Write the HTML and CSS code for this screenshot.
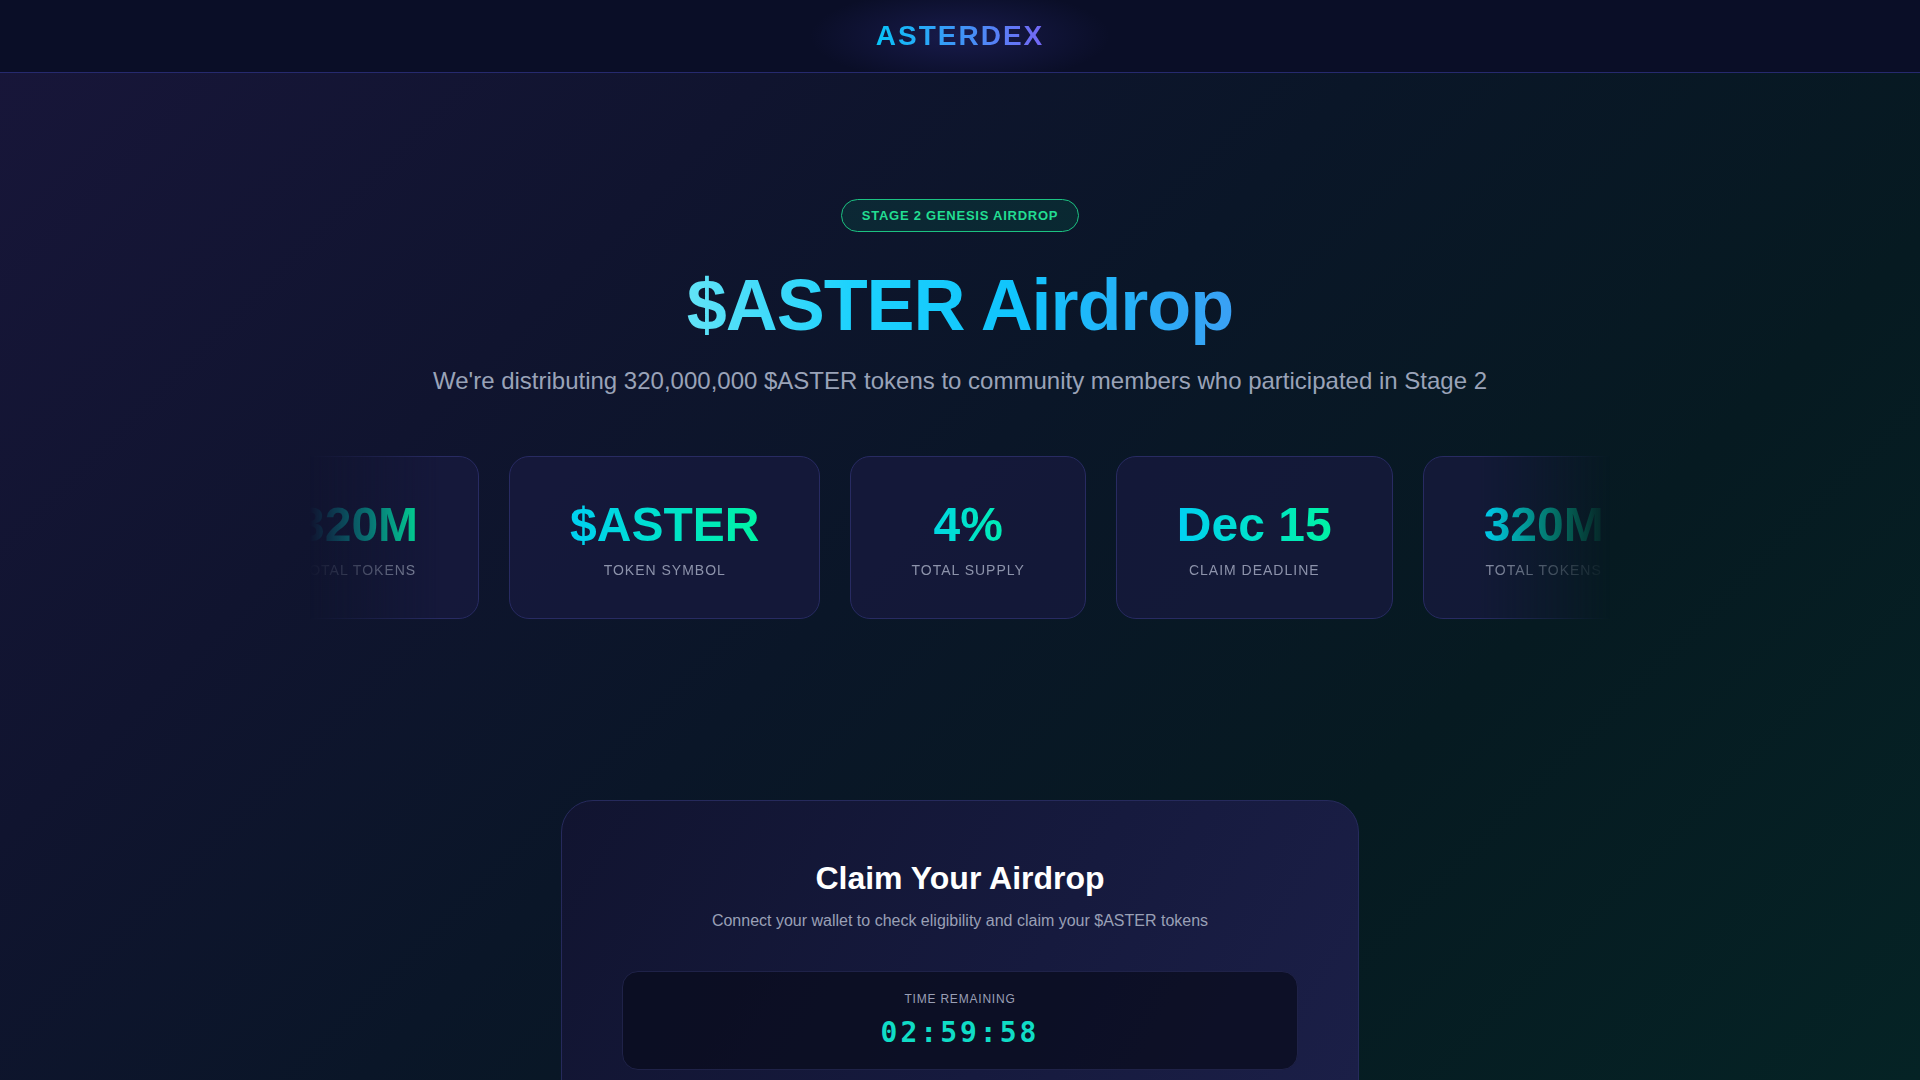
FILE: index.html
```html
<!DOCTYPE html>
<html lang="en">
<head>
<meta charset="utf-8">
<title>$ASTER Airdrop</title>
<link rel="stylesheet" href="styles.css">
</head>
<body>
<header class="topbar">
  <div class="logo">ASTERDEX</div>
</header>
<main class="page">
  <section class="hero">
    <div class="badge">STAGE 2 GENESIS AIRDROP</div>
    <h1 class="title">$ASTER Airdrop</h1>
    <p class="subtitle">We're distributing 320,000,000 $ASTER tokens to community members who participated in Stage 2</p>
    <div class="stats">
      <div class="track">
        <div class="stat"><div class="stat-value">320M</div><div class="stat-label">TOTAL TOKENS</div></div>
        <div class="stat"><div class="stat-value">$ASTER</div><div class="stat-label">TOKEN SYMBOL</div></div>
        <div class="stat"><div class="stat-value">4%</div><div class="stat-label">TOTAL SUPPLY</div></div>
        <div class="stat"><div class="stat-value">Dec 15</div><div class="stat-label">CLAIM DEADLINE</div></div>
        <div class="stat"><div class="stat-value">320M</div><div class="stat-label">TOTAL TOKENS</div></div>
        <div class="stat"><div class="stat-value">$ASTER</div><div class="stat-label">TOKEN SYMBOL</div></div>
        <div class="stat"><div class="stat-value">4%</div><div class="stat-label">TOTAL SUPPLY</div></div>
      </div>
    </div>
  </section>
  <section class="claim">
    <h2 class="claim-title">Claim Your Airdrop</h2>
    <p class="claim-sub">Connect your wallet to check eligibility and claim your $ASTER tokens</p>
    <div class="timer">
      <div class="timer-label">TIME REMAINING</div>
      <div class="timer-value">02:59:58</div>
    </div>
    <button class="connect">Connect Wallet</button>
  </section>
</main>
</body>
</html>
```
FILE: styles.css
```css
* { box-sizing: border-box; }
html, body { margin: 0; padding: 0; }
body {
  font-family: "Liberation Sans", Arial, sans-serif;
  color: #ffffff;
  min-height: 100vh;
  background: linear-gradient(135deg, #18163a 0%, #10142f 28%, #0a1628 48%, #061a21 72%, #052325 100%);
  background-attachment: fixed;
}
.topbar {
  height: 73px;
  display: flex;
  align-items: center;
  justify-content: center;
  background: radial-gradient(ellipse 150px 48px at 50% 50%, rgba(60, 60, 170, 0.28), rgba(60, 60, 170, 0) 100%), #0a0e27;
  border-bottom: 1px solid #262a6e;
}
.logo {
  font-size: 28px;
  font-weight: 700;
  letter-spacing: 2px;
  background: linear-gradient(90deg, #08c4f8 0%, #3f95f7 50%, #7566f5 100%);
  -webkit-background-clip: text;
  background-clip: text;
  color: transparent;
  margin-top: -1px;
}
.page { display: flex; flex-direction: column; align-items: center; }
.hero {
  width: 100%;
  display: flex;
  flex-direction: column;
  align-items: center;
  padding-top: 126px;
}
.badge {
  font-size: 13px;
  font-weight: 700;
  letter-spacing: 0.75px;
  color: #22dd92;
  padding: 8px 20px;
  border: 1px solid #1cc282;
  border-radius: 999px;
  background: rgba(0, 200, 120, 0.11);
  margin-bottom: 30px;
}
.title {
  margin: 0 0 14px;
  font-size: 72px;
  line-height: 1.2;
  font-weight: 700;
  letter-spacing: -0.015em;
  background: linear-gradient(90deg, #62e3f7 0%, #1dd2fd 30%, #10c4fc 60%, #3aa0f4 100%);
  -webkit-background-clip: text;
  background-clip: text;
  color: transparent;
}
.subtitle {
  margin: 0;
  font-size: 24px;
  line-height: 1.6;
  color: #9aa3b8;
}
.stats {
  margin-top: 55px;
  width: 1300px;
  overflow: hidden;
  -webkit-mask-image: linear-gradient(90deg, transparent 0%, #000 10%, #000 90%, transparent 100%);
  mask-image: linear-gradient(90deg, transparent 0%, #000 10%, #000 90%, transparent 100%);
}
.track {
  display: flex;
  gap: 30px;
  width: max-content;
  transform: translateX(-73px);
}
.stat {
  flex: none;
  padding: 40px 60px;
  border: 1px solid #282b62;
  border-radius: 20px;
  background: rgba(24, 26, 64, 0.7);
  text-align: center;
}
.stat-value {
  font-size: 48px;
  font-weight: 700;
  background: linear-gradient(90deg, #00d0f2 0%, #00f3a4 100%);
  -webkit-background-clip: text;
  background-clip: text;
  color: transparent;
}
.stat-label {
  margin-top: 10px;
  font-size: 14px;
  letter-spacing: 1px;
  color: #8d93ab;
}
.claim {
  margin-top: 181px;
  width: 798px;
  padding: 59px 60px 60px;
  border: 1px solid #262a5c;
  border-radius: 32px;
  background: linear-gradient(120deg, #111430 0%, #161a3e 55%, #1c2049 100%);
  display: flex;
  flex-direction: column;
  align-items: center;
  margin-bottom: 80px;
}
.claim-title {
  margin: 0 0 15px;
  font-size: 32px;
  font-weight: 700;
  color: #ffffff;
}
.claim-sub {
  margin: 0;
  font-size: 16px;
  color: #9aa0b6;
}
.timer {
  margin-top: 41px;
  width: 100%;
  padding: 20px;
  border: 1px solid #1f2248;
  border-radius: 16px;
  background: rgba(10, 12, 30, 0.75);
  text-align: center;
}
.timer-label {
  font-size: 12px;
  letter-spacing: 0.8px;
  color: #9a9fb5;
}
.timer-value {
  margin-top: 10px;
  font-family: "DejaVu Sans Mono", monospace;
  font-size: 28px;
  font-weight: 700;
  letter-spacing: 3px;
  color: #10dcc6;
}
.connect {
  margin-top: 32px;
  width: 100%;
  padding: 18px;
  border: none;
  border-radius: 14px;
  font-family: inherit;
  font-size: 18px;
  font-weight: 700;
  color: #0a0e27;
  background: linear-gradient(90deg, #00d0f2, #00f3a4);
}
```
